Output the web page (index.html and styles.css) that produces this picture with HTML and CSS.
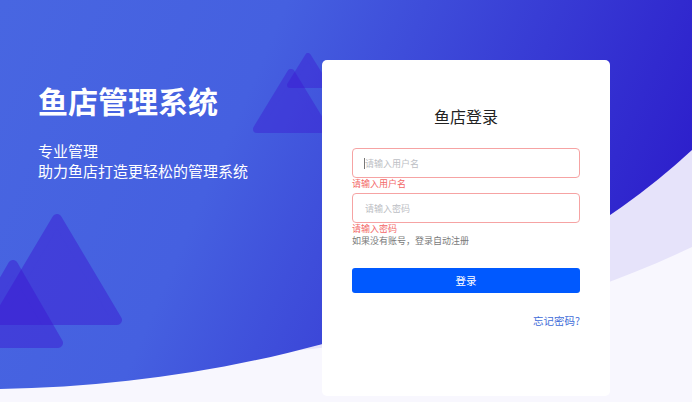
FILE: index.html
```html
<!DOCTYPE html>
<html lang="zh-CN">
<head>
<meta charset="utf-8">
<title>鱼店登录</title>
<link rel="stylesheet" href="styles.css">
</head>
<body>
<svg class="bg" viewBox="0 0 692 402" width="692" height="402" aria-hidden="true">
  <defs>
    <linearGradient id="blue" x1="0" y1="0" x2="692" y2="300" gradientUnits="userSpaceOnUse">
      <stop offset="0" stop-color="#4866e1"/>
      <stop offset="0.35" stop-color="#4560e0"/>
      <stop offset="1" stop-color="#2a17c9"/>
    </linearGradient>
  </defs>
  <path d="M0,0 H692 V247 C560,310 420,340 280,352 H0 Z" fill="#e6e3fa"/>
  <path d="M0,0 H692 V150 C520,310 250,385 0,389 Z" fill="url(#blue)"/>
  <g fill="#3b16d2" stroke="#3b16d2" stroke-linejoin="round">
    <path d="M308,56 L326,85 L290,85 Z" stroke-width="6" opacity="0.4"/>
    <path d="M291,73 L325,129 L257,129 Z" stroke-width="8" opacity="0.4"/>
    <path d="M57,219 L117,320 L-3,320 Z" stroke-width="10" opacity="0.45"/>
    <path d="M13,265 L58,343 L-32,343 Z" stroke-width="10" opacity="0.45"/>
  </g>
</svg>
<div class="page">
  <section class="hero">
    <h1 class="hero-title">鱼店管理系统</h1>
    <p class="hero-sub">专业管理<br>助力鱼店打造更轻松的管理系统</p>
  </section>
  <section class="card">
    <h2 class="card-title">鱼店登录</h2>
    <div class="field">
      <span class="caret"></span>
      <input class="input" type="text" placeholder="请输入用户名">
    </div>
    <div class="error">请输入用户名</div>
    <div class="field field-2">
      <input class="input" type="password" placeholder="请输入密码">
    </div>
    <div class="error">请输入密码</div>
    <div class="hint">如果没有账号，登录自动注册</div>
    <button class="btn" type="button">登录</button>
    <div class="forgot"><a class="link" href="#">忘记密码?</a></div>
  </section>
</div>
</body>
</html>
```
FILE: styles.css
```css
html, body {
  margin: 0;
  padding: 0;
}
body {
  width: 692px;
  height: 402px;
  overflow: hidden;
  background: #f8f7fe;
  font-family: "Noto Sans CJK SC", "Noto Sans", sans-serif;
  position: relative;
}
.bg {
  position: absolute;
  left: 0;
  top: 0;
  display: block;
}
.page {
  position: relative;
  display: flex;
  height: 402px;
}
.hero {
  width: 322px;
  box-sizing: border-box;
  padding: 80px 0 0 38px;
  color: #fff;
}
.hero-title {
  margin: 0;
  font-size: 30px;
  line-height: 40px;
  font-weight: 700;
  letter-spacing: 0;
}
.hero-sub {
  margin: 21px 0 0;
  font-size: 15px;
  line-height: 20px;
  font-weight: 400;
}
.card {
  width: 288px;
  height: 336px;
  margin-top: 60px;
  box-sizing: border-box;
  padding: 44px 30px 0;
  background: #fff;
  border-radius: 5px;
  display: flex;
  flex-direction: column;
}
.card-title {
  margin: 0 0 20px;
  text-align: center;
  font-size: 16px;
  line-height: 24px;
  font-weight: 400;
  color: #222;
}
.field {
  position: relative;
  height: 30px;
}
.field-2 {
  margin-top: 3px;
}
.input {
  display: block;
  width: 100%;
  height: 30px;
  box-sizing: border-box;
  border: 1px solid #f6a3a3;
  border-radius: 4px;
  padding: 0 12px;
  font-family: inherit;
  font-size: 9px;
  outline: none;
  background: #fff;
}
.input::placeholder {
  color: #bcbec4;
}
.caret {
  position: absolute;
  left: 12px;
  top: 10px;
  width: 1px;
  height: 11px;
  background: #777;
}
.error {
  font-size: 9px;
  line-height: 12px;
  color: #f36868;
}
.hint {
  font-size: 9px;
  line-height: 12px;
  color: #7a7a7a;
}
.btn {
  margin-top: 21px;
  height: 25px;
  border: none;
  border-radius: 3px;
  background: #0059ff;
  color: #fff;
  font-family: inherit;
  font-size: 10.5px;
  padding: 0;
}
.forgot {
  margin-top: 22px;
  text-align: right;
  font-size: 10.5px;
  line-height: 12px;
}
.link {
  color: #3e6bd8;
  text-decoration: none;
}
```
